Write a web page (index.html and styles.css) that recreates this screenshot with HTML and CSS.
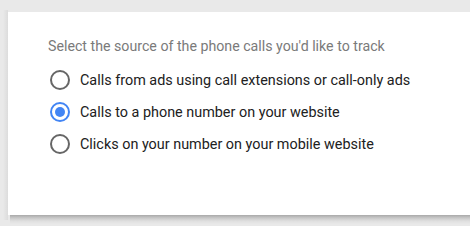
FILE: index.html
```
<!DOCTYPE html>
<html lang="en">
<head>
  <meta charset="UTF-8" />
  <title>Phone call source</title>
  <link rel="stylesheet" href="styles.css">
</head>
<body>
  <div class="card">
    <div class="card-title">Select the source of the phone calls you'd like to track</div>
    <div class="options">
      <label class="option">
        <span class="radio"></span>
        <span class="option-label">Calls from ads using call extensions or call-only ads</span>
      </label>
      <label class="option">
        <span class="radio checked"></span>
        <span class="option-label">Calls to a phone number on your website</span>
      </label>
      <label class="option">
        <span class="radio"></span>
        <span class="option-label">Clicks on your number on your mobile website</span>
      </label>
    </div>
  </div>
  <div class="card-shadow"></div>
</body>
</html>
```

FILE: styles.css
```
body {
  margin: 0;
  padding: 12px 0 0 8px;
  background: linear-gradient(to right, #e9e9e9 0px, #e9e9e9 3px, #dcdcdc 8px) no-repeat 0 10px / 8px 210px, #e9e9e9;
  font-family: Roboto, Arial, sans-serif;
}

.card {
  background: #ffffff;
  height: 203px;
  box-sizing: border-box;
  padding: 24px 40px 0 40px;
}

.card-shadow {
  height: 9px;
  margin-left: 2px;
  background: linear-gradient(to bottom, #a9a9a9 0px, #c8c8c8 3px, #dfdfdf 6px, #e9e9e9 9px);
}

.card-title {
  font-size: 14.2px;
  line-height: 20px;
  color: #7a7a7a;
}

.options {
  margin-top: 14px;
  margin-left: 2px;
  display: flex;
  flex-direction: column;
  gap: 12px;
}

.option {
  display: flex;
  align-items: center;
  gap: 10px;
  height: 20px;
}

.radio {
  width: 20px;
  height: 20px;
  box-sizing: border-box;
  border: 2px solid #666666;
  border-radius: 50%;
  display: flex;
  align-items: center;
  justify-content: center;
}

.radio.checked {
  border-color: #4285f4;
}

.radio.checked::after {
  content: "";
  width: 10px;
  height: 10px;
  border-radius: 50%;
  background: #4285f4;
}

.option-label {
  font-size: 14.4px;
  color: #212121;
}
```
